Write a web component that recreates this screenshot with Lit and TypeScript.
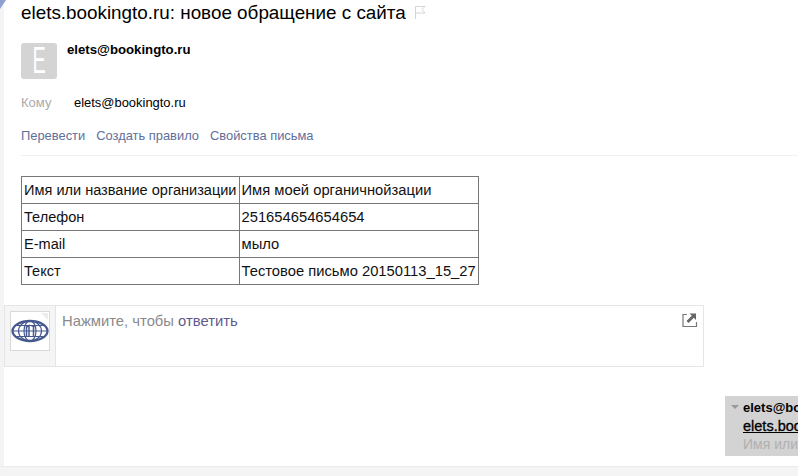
import { LitElement, html, css } from "lit";
import { customElement } from "lit/decorators.js";

@customElement("app-root")
export class AppRoot extends LitElement {
  static styles = css`
    :host { display: block; position: relative; width: 798px; height: 476px; overflow: hidden; background: #fff; font-family: "Liberation Sans", Arial, sans-serif; color: #000; }
    .strip { position: absolute; left: 0; top: 0; width: 4px; height: 466px; background: #f4f4f6; }
    .corner { position: absolute; left: 0; top: 0; }
    .mail { display: flex; flex-direction: column; align-items: stretch; padding: 0 0 0 21px; }
    .title { display: flex; align-items: center; gap: 8px; height: 25px; font-size: 18.85px; line-height: 25px; white-space: nowrap; }
    .title svg { margin-top: -1px; }
    .sender { display: flex; gap: 10px; margin-top: 18px; height: 36px; }
    .avatar { width: 36px; height: 36px; border-radius: 3px; background: #d4d4d4; color: #fff; display: flex; align-items: center; justify-content: center; font-size: 36px; line-height: 36px; }
    .avatar span { display: block; transform: scaleX(0.55); }
    .from { font-size: 13.2px; font-weight: 700; line-height: 14px; }
    .to { display: flex; margin-top: 16px; height: 16px; font-size: 12.95px; line-height: 16px; }
    .to .lbl { width: 53px; color: #aaa; font-size: 13px; }
    .links { display: flex; gap: 11px; margin-top: 17px; height: 16px; font-size: 12.9px; line-height: 16px; color: #5f6f9c; }
    .rule { height: 1px; background: #f1f1f1; margin-top: 11px; }
    table { align-self: flex-start; border-collapse: collapse; margin-top: 20px; font-size: 14.55px; line-height: 16px; border: 1px solid #777; }
    td { border: 1px solid #777; padding: 0 2px; height: 26px; box-sizing: border-box; white-space: nowrap; color: #111; }
    td.val { font-size: 14.75px; }
    tr { height: 27px; }
    .reply { display: flex; width: 698px; height: 60px; margin: 20px 0 0 -17px; border: 1px solid #e5e5e5; }
    .side { flex: none; width: 51px; background: #f5f5f5; border-right: 1px solid #e5e5e5; padding: 5px 0 0 5px; box-sizing: border-box; }
    .logo { width: 38px; height: 38px; border: 1px solid #d9d9d9; background: #fff; display: flex; align-items: center; justify-content: center; }
    .prompt { flex: 1; padding: 6px; font-size: 14.8px; line-height: 18px; color: #8a8a8a; position: relative; }
    .prompt a { color: #5f5a8c; }
    .expand { position: absolute; right: 5px; top: 6px; }
    .popup { position: absolute; left: 725px; top: 396px; width: 73px; height: 60px; background: #d3d3d3; overflow: hidden; line-height: 18px; white-space: nowrap; padding: 3px 0 0 18px; box-sizing: border-box; }
    .popup .tri { position: absolute; left: 6px; top: 9px; width: 0; height: 0; border-left: 4px solid transparent; border-right: 4px solid transparent; border-top: 4px solid #999; }
    .popup b { display: block; font-size: 13px; font-weight: 700; color: #000; }
    .popup u { display: block; font-size: 14.5px; color: #000; -webkit-text-stroke: 0.3px #000; }
    .popup span { display: block; color: #b0b0b0; font-size: 14px; }
    .bottom { position: absolute; left: 0; right: 0; top: 466px; height: 10px; background: #f4f4f4; border-top: 1px solid #ececec; }
  `;

  render() {
    return html`
      <div class="strip"></div>
      <svg class="corner" width="6" height="9" viewBox="0 0 6 9"><path d="M0 0H6L0 9Z" fill="#8f9fd0"/></svg>
      <div class="mail">
        <div class="title">
          <span>elets.bookingto.ru: новое обращение с сайта</span>
          <svg width="12" height="14" viewBox="0 0 12 14" fill="none" stroke="#d4d4d4"><path d="M1.5 14V1.5H11L8 4.5L11 8H1.5"/></svg>
        </div>
        <div class="sender">
          <div class="avatar"><span>E</span></div>
          <div class="from">elets@bookingto.ru</div>
        </div>
        <div class="to"><span class="lbl">Кому</span><span>elets@bookingto.ru</span></div>
        <div class="links"><span>Перевести</span><span>Создать правило</span><span>Свойства письма</span></div>
        <div class="rule"></div>
        <table>
          <tr><td>Имя или название организации</td><td class="val">Имя моей органичнойзации</td></tr>
          <tr><td>Телефон</td><td class="val">251654654654654</td></tr>
          <tr><td>E-mail</td><td class="val">мыло</td></tr>
          <tr><td>Текст</td><td class="val">Тестовое письмо 20150113_15_27</td></tr>
        </table>
        <div class="reply">
          <div class="side">
            <div class="logo">
              <svg width="38" height="38" viewBox="0 0 38 38" fill="none" stroke="#46598f" stroke-width="1.2">
                <path d="M30 1H37V8Z" fill="#ececec" stroke="none"/>
                <ellipse cx="19" cy="19" rx="17.5" ry="10" stroke-width="2.3"/>
                <ellipse cx="19" cy="19" rx="11.5" ry="10"/>
                <ellipse cx="19" cy="19" rx="6" ry="10"/>
                <path d="M2 19H36M5 13.5H33M5 24.5H33"/>
                <path d="M15.5 25V15L18 13.5V25M20.5 14H24.5M22.5 14V25" stroke-width="1.5"/>
              </svg>
            </div>
          </div>
          <div class="prompt">
            Нажмите, чтобы <a>ответить</a>
            <svg class="expand" width="16" height="16" viewBox="0 0 16 16" fill="none">
              <path d="M5 2.5H1V14.5H14.5V10" stroke="#777" stroke-width="1.2"/>
              <path d="M14 1.5V8L11.8 5.8L6.5 11L4.5 9L9.8 3.7L7.5 1.5Z" fill="#666"/>
            </svg>
          </div>
        </div>
      </div>
      <div class="popup">
        <div class="tri"></div>
        <b>elets@bookingto.ru</b>
        <u>elets.bookingto.ru</u>
        <span>Имя или название</span>
      </div>
      <div class="bottom"></div>
    `;
  }
}
